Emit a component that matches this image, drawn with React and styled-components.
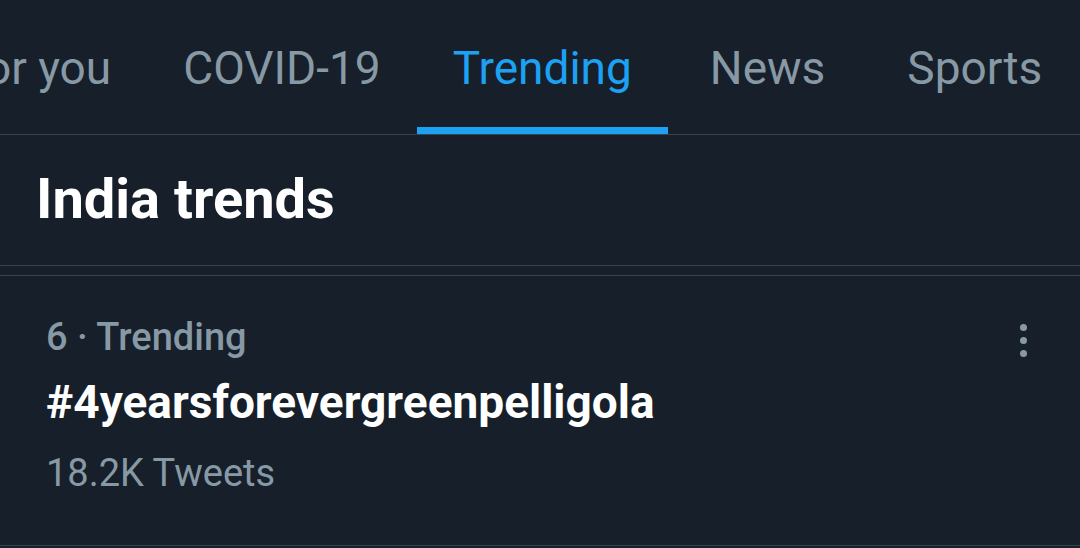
import React from 'react';
import styled, { createGlobalStyle } from 'styled-components';

const GlobalStyle = createGlobalStyle`
  *, *::before, *::after {
    box-sizing: border-box;
  }
  html, body {
    margin: 0;
    padding: 0;
    background: #17202a;
  }
  body {
    font-family: Roboto, "Noto Sans", sans-serif;
    -webkit-font-smoothing: antialiased;
  }
`;

const Screen = styled.div`
  width: 1080px;
  height: 548px;
  background: #17202a;
  overflow: hidden;
`;

const TabBar = styled.nav`
  height: 135px;
  border-bottom: 1px solid #38444d;
  overflow: hidden;
`;

const TabRow = styled.div`
  display: flex;
  height: 100%;
  margin-left: -76px;
`;

const Tab = styled.div`
  position: relative;
  display: flex;
  align-items: center;
  padding: 2px ${({ $pad }) => $pad || 36}px 0;
  font-size: 46px;
  white-space: nowrap;
  color: ${({ $active }) => ($active ? '#1da1f2' : '#8899a6')};
`;

const Indicator = styled.span`
  position: absolute;
  left: 0;
  right: 0;
  bottom: 0;
  height: 7px;
  background: #1da1f2;
`;

const SectionHeader = styled.header`
  height: 131px;
  display: flex;
  align-items: center;
  padding: 0 36px 2px;
  border-bottom: 1px solid #38444d;
`;

const Title = styled.h2`
  margin: 0;
  font-size: 56px;
  font-weight: 700;
  color: #ffffff;
`;

const Gap = styled.div`
  height: 10px;
  border-bottom: 1px solid #38444d;
`;

const TrendItem = styled.article`
  position: relative;
  height: 270px;
  padding: 38px 46px 0;
  border-bottom: 1px solid #38444d;
`;

const Meta = styled.div`
  font-size: 38px;
  font-weight: ${({ $weight }) => $weight || 400};
  color: #8899a6;
  line-height: 47px;
`;

const Hashtag = styled.div`
  margin: 18px 0 24px;
  font-size: 46px;
  font-weight: 700;
  color: #ffffff;
  line-height: 47px;
`;

const MoreButton = styled.button`
  position: absolute;
  top: 48px;
  right: 53px;
  padding: 0;
  border: 0;
  background: none;
  display: flex;
  flex-direction: column;
  gap: 6px;
`;

const Dot = styled.span`
  width: 7px;
  height: 7px;
  border-radius: 50%;
  background: #8899a6;
`;

const tabs = [
  { label: 'For you', pad: 36 },
  { label: 'COVID-19', pad: 36 },
  { label: 'Trending', pad: 36 },
  { label: 'News', pad: 42 },
  { label: 'Sports', pad: 40 },
];

export default function App() {
  return (
    <Screen>
      <GlobalStyle />
      <TabBar>
        <TabRow>
          {tabs.map((t) => (
            <Tab key={t.label} $pad={t.pad} $active={t.label === 'Trending'}>
              {t.label}
              {t.label === 'Trending' && <Indicator />}
            </Tab>
          ))}
        </TabRow>
      </TabBar>
      <SectionHeader>
        <Title>India trends</Title>
      </SectionHeader>
      <Gap />
      <TrendItem>
        <Meta $weight={500}>6 · Trending</Meta>
        <Hashtag>#4yearsforevergreenpelligola</Hashtag>
        <Meta>18.2K Tweets</Meta>
        <MoreButton aria-label="More">
          <Dot />
          <Dot />
          <Dot />
        </MoreButton>
      </TrendItem>
    </Screen>
  );
}
